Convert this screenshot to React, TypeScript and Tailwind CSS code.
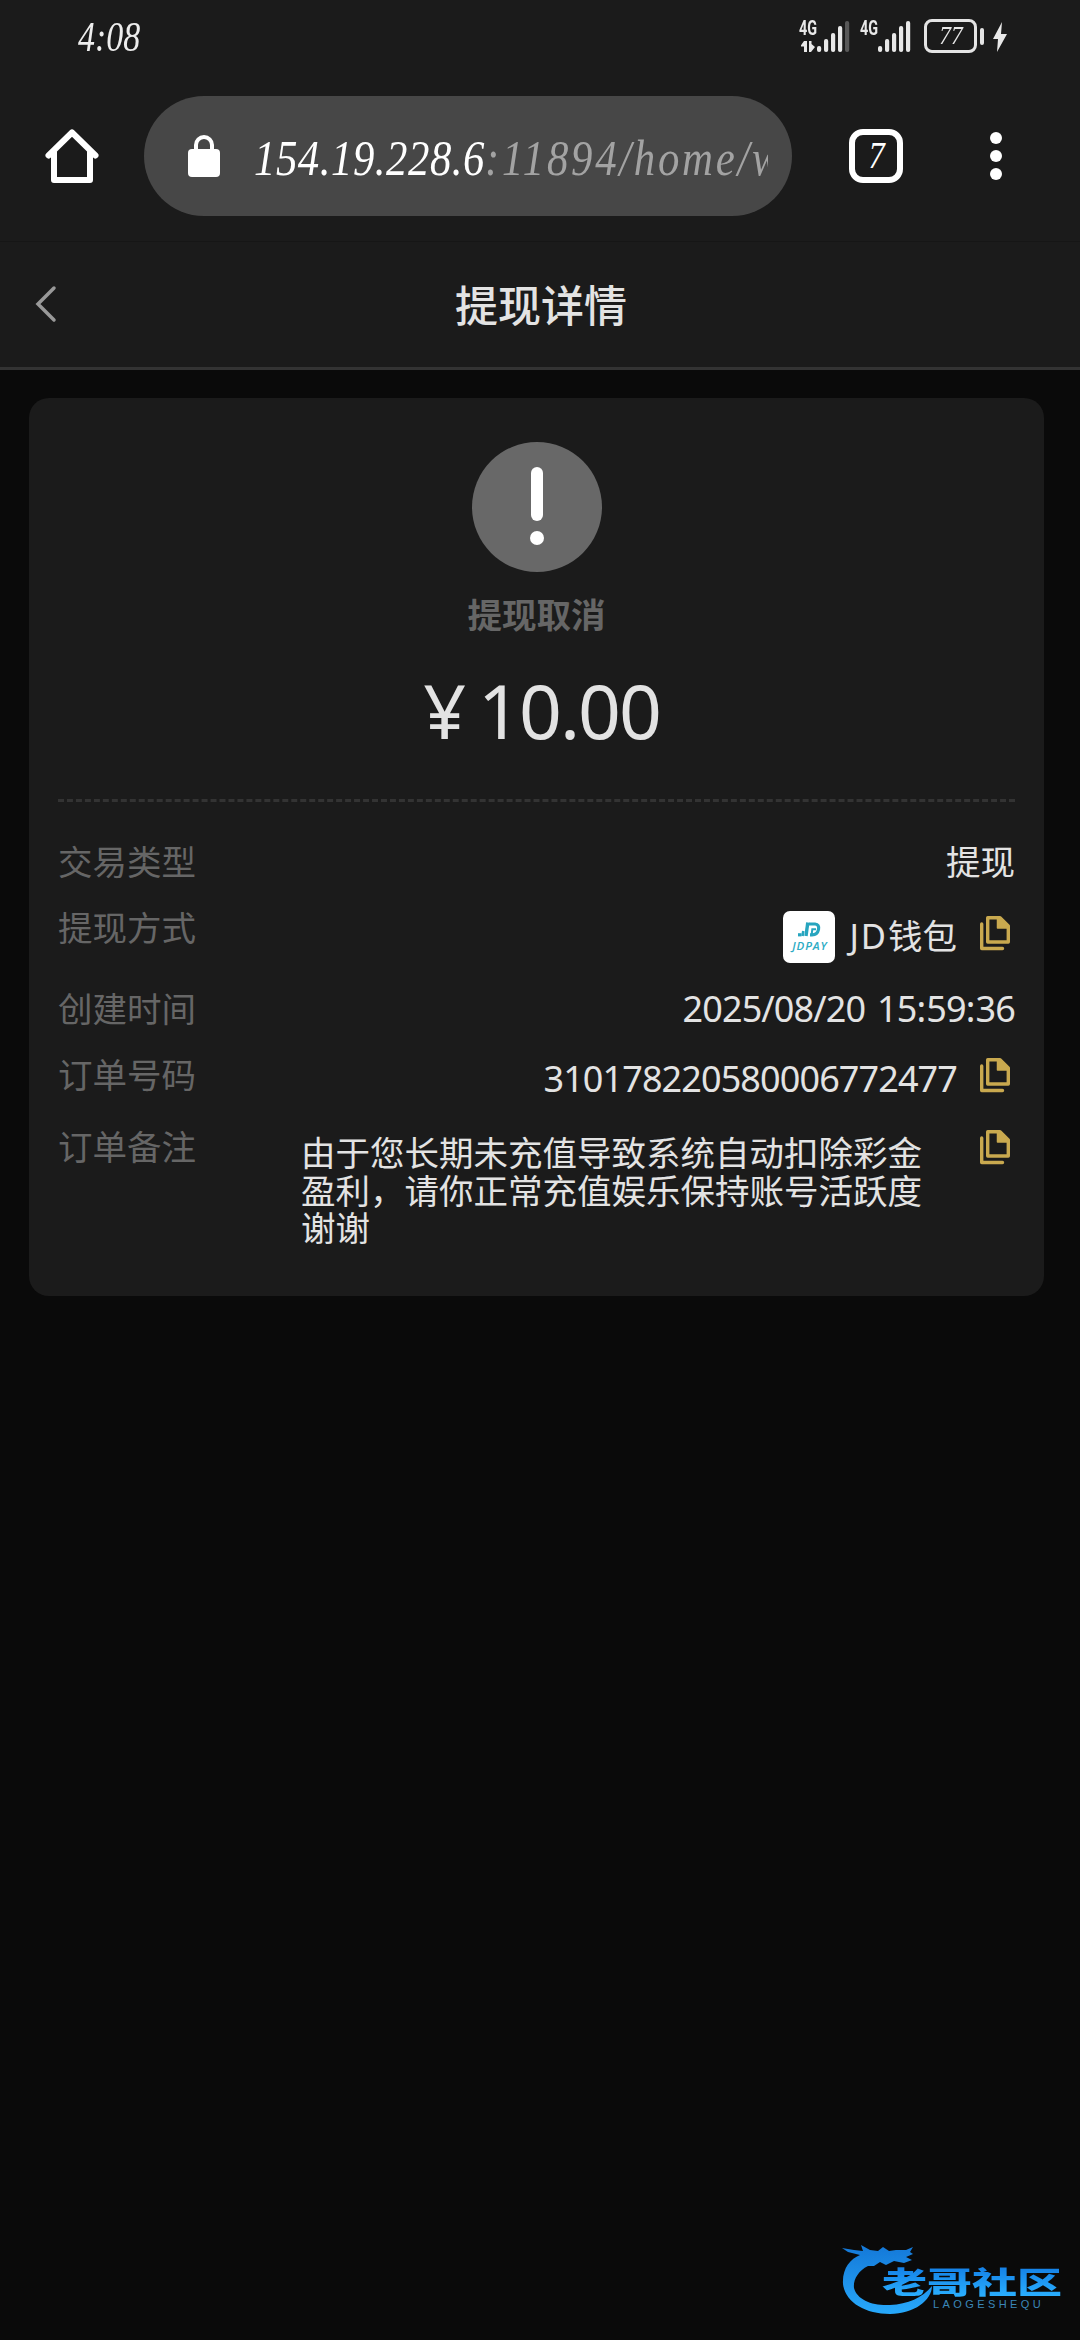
import React from 'react';

interface DetailRowProps {
  label: string;
  className: string;
  children: React.ReactNode;
}

const StatusBar: React.FC = () => (
  <div className="flex h-[72px] items-start justify-between pl-[78px] pr-[72px]">
    <span className="mt-[13px] inline-block origin-left scale-x-[0.79] font-['Liberation_Serif'] text-[43px] leading-[48px] italic text-[#ededed]">
      4:08
    </span>
    <div className="mt-[19px] flex items-start text-[#e8e8e8]">
      <SignalIcon weak />
      <div className="w-[11px]" />
      <SignalIcon />
      <div className="ml-[12px] flex h-[34px] w-[53px] items-center justify-center rounded-[8px] border-[3px] border-[#e4e4e4]">
        <span className="inline-block scale-x-90 font-['Liberation_Serif'] text-[26px] leading-[28px] italic">77</span>
      </div>
      <div className="ml-[3px] mt-[9px] h-[17px] w-[4px] rounded-[2px] bg-[#e4e4e4]" />
      <svg className="ml-[8px] mt-[3px] h-[30px] w-[16px]" viewBox="0 0 16 30" fill="currentColor">
        <path d="M10 0 L1 17 H6 L5 30 L15 12 H9 Z" />
      </svg>
    </div>
  </div>
);

const SignalIcon: React.FC<{ weak?: boolean }> = ({ weak = false }) => (
  <div className="relative h-[34px] w-[50px]">
    <span className="absolute -left-[2px] top-0 inline-block origin-left scale-x-[0.72] font-['Roboto'] text-[20px] leading-[18px] font-bold">
      4G
    </span>
    <svg className="h-[34px] w-[50px]" viewBox="0 0 50 34" fill="currentColor">
      {weak && <path d="M3 22 H6 V33 H3 V27.500 H-1 Z M8 22 H10.500 V25 L14 28 L10 33 H8 Z" overflow="visible" />}
      <rect x="16" y="27" width="4.200" height="6" rx="2" />
      <rect x="23" y="20" width="4.200" height="13" rx="2" />
      <rect x="30" y="14" width="4.200" height="19" rx="2" />
      <rect x="37" y="7" width="4.200" height="26" rx="2" />
      <rect x="44" y="2" width="4.200" height="31" rx="2" opacity={weak ? 0.3 : 1} />
    </svg>
  </div>
);

const BrowserBar: React.FC = () => (
  <div className="flex h-[170px] items-start border-b border-[#161616] pt-[24px]">
    <svg
      className="ml-[42px] mt-[30px] h-[60px] w-[60px]"
      viewBox="0 0 60 60"
      fill="none"
      stroke="white"
      strokeWidth="6"
      strokeLinecap="round"
      strokeLinejoin="round"
    >
      <path d="M6.500 29.500 L30 6.500 L53.500 29.500" />
      <path d="M12 26 V54 H48 V26" />
    </svg>
    <div className="ml-[42px] flex h-[120px] w-[648px] items-center rounded-full bg-[#474747] pl-[44px] pr-[24px]">
      <svg className="h-[44px] w-[32px] shrink-0" viewBox="0 0 32 44">
        <path d="M8 17 V11 a8 8 0 0 1 16 0 V17" fill="none" stroke="white" strokeWidth="4" />
        <rect y="15" width="32" height="28" rx="4" fill="white" />
      </svg>
      <div className="mt-[3px] ml-[34px] w-[514px] overflow-hidden font-['Liberation_Serif'] text-[51px] leading-[64px] italic whitespace-nowrap">
        <div className="inline-block origin-left scale-x-[0.84]">
          <span className="tracking-[0.600px] text-white">154.19.228.6</span>
          <span className="tracking-[3.200px] text-[#a3a3a3]">:11894/home/w</span>
        </div>
      </div>
    </div>
    <div className="ml-[57px] mt-[33px] flex h-[54px] w-[54px] items-center justify-center rounded-[14px] border-[6px] border-white">
      <span className="inline-block -translate-y-px scale-x-85 font-['Liberation_Serif'] text-[38px] leading-[40px] italic text-white">7</span>
    </div>
    <div className="ml-[87px] mt-[36px] flex flex-col gap-[6px]">
      <div className="size-[12px] rounded-full bg-white" />
      <div className="size-[12px] rounded-full bg-white" />
      <div className="size-[12px] rounded-full bg-white" />
    </div>
  </div>
);

const PageHeader: React.FC = () => (
  <div className="flex h-[128px] items-center border-b-[3px] border-[#333333] pl-[34px] pr-[56px]">
    <svg className="h-[40px] w-[24px]" viewBox="0 0 24 40" fill="none" stroke="#999999" strokeWidth="3.500" strokeLinecap="round">
      <path d="M20 3 L4 19 L20 35" />
    </svg>
    <h1 className="mt-[2px] flex-1 text-center text-[43px] leading-[60px] font-medium text-[#e3e3e3]">提现详情</h1>
  </div>
);

const CopyIcon: React.FC = () => (
  <svg className="h-[36px] w-[32px]" viewBox="0 0 32 36" fill="none" stroke="#c9a94f" strokeWidth="3.400" strokeLinejoin="round" strokeLinecap="round">
    <path d="M8.700 2.700 H21 L29.300 11 V27 H8.700 Z" />
    <path d="M18.500 2.700 H21 L29.300 11 V13 H18.500 Z" fill="#c9a94f" strokeWidth="1.500" />
    <path d="M2.700 9 V33.500 H23.500" />
  </svg>
);

const JdPayLogo: React.FC = () => (
  <div className="flex size-[52px] flex-col items-center rounded-[7px] bg-white pt-[11px]">
    <svg className="h-[15px] w-[24px]" viewBox="0 0 24 15" fill="none" stroke="#27a5bf">
      <path d="M1 12.800 H4.500" strokeWidth="3.200" />
      <path d="M5.500 14 L6.300 9" strokeWidth="2.600" />
      <path d="M10.800 0.500 L9 14" strokeWidth="3.400" />
      <path d="M12 2 H18 Q22.500 2.500 21.500 7.500 Q20.500 12.800 15 12.800 H13" strokeWidth="3.200" />
      <path d="M14.500 14 L15.300 7.300 H19" strokeWidth="2" />
    </svg>
    <span className="mt-[2px] pl-px font-['Open_Sans'] text-[11.500px] leading-[14px] font-semibold tracking-[0.900px] italic text-[#2cabc4]">
      JDPAY
    </span>
  </div>
);

const DetailRow: React.FC<DetailRowProps> = ({ label, className, children }) => (
  <div className={`flex items-start justify-between ${className}`}>
    <span className="text-[34.500px] leading-[40px] text-[#666666]">{label}</span>
    {children}
  </div>
);

const Watermark: React.FC = () => (
  <div className="absolute right-[12px] bottom-[24px] h-[74px] w-[228px]">
    <svg className="absolute inset-0 h-[74px] w-[228px]" viewBox="0 0 228 74">
      <defs>
        <linearGradient id="dragon" x1="0" y1="0" x2="0" y2="1">
          <stop offset="0" stopColor="#1478d8" />
          <stop offset="1" stopColor="#27a9fb" />
        </linearGradient>
      </defs>
      <path
        d="M2 6 L14 8 L23 9 L21 3 L30 8 L38 9 L43 5 L49 9 L56 8 L66 8 L73 5 L70 10 L73 12 L66 15 L72 18 L64 21 L54 19 L46 23 L40 20 L34 24 L28 24 C18 29 13 38 14 46 C17 58 33 64 50 63 C68 62 82 56 92 44 C92 58 74 72 50 72 C25 72 5 60 3 42 C2 27 10 17 20 13 L8 10 Z"
        fill="url(#dragon)"
      />
    </svg>
    <div className="absolute left-[42px] top-[25px] h-[30px] origin-left scale-x-[1.5] bg-linear-to-b from-[#1580e6] to-[#2bb0ff] bg-clip-text text-[30px] leading-[30px] font-black whitespace-nowrap text-transparent">
      老哥社区
    </div>
    <div className="absolute left-[93px] top-[56px] font-['Liberation_Sans'] text-[11px] leading-[12px] tracking-[3.400px] text-[#3a87b8]">
      LAOGESHEQU
    </div>
  </div>
);

export default function App() {
  return (
    <div className="relative h-[2340px] w-[1080px] overflow-hidden bg-[#0a0a0a] font-['Noto_Sans','Noto_Sans_CJK_SC',sans-serif]">
      <div className="bg-[#1b1b1b]">
        <StatusBar />
        <BrowserBar />
        <PageHeader />
      </div>

      <div className="mt-[28px] ml-[29px] h-[898px] w-[1015px] rounded-[20px] bg-[#1b1b1b] px-[29px] pt-[44px] text-[#e3e3e3]">
        <div className="flex flex-col items-center">
          <div className="flex size-[130px] flex-col items-center rounded-full bg-[#686868] pt-[25px]">
            <div className="h-[54px] w-[12px] rounded-full bg-white" />
            <div className="mt-[10px] size-[14px] rounded-full bg-white" />
          </div>
          <div className="mt-[21px] h-[45px] text-[34.500px] leading-[44px] font-bold text-[#666666]">提现取消</div>
          <div className="mt-[27px] mb-[5px] flex pl-[10px] text-[75px] leading-[90px] tracking-[-2px]">
            <span>¥</span>
            <span className="ml-[14px]">10.00</span>
          </div>
        </div>

        <div className="mt-[39px] border-t-[3px] border-dashed border-[#333333]" />

        <div className="mt-[40px]">
          <DetailRow label="交易类型" className="h-[66px]">
            <span className="text-[34.500px] leading-[40px]">提现</span>
          </DetailRow>
          <DetailRow label="提现方式" className="h-[81px]">
            <div className="flex items-start">
              <div className="mt-[3px]">
                <JdPayLogo />
              </div>
              <span className="mt-[8px] ml-[14px] text-[34.500px] leading-[40px]">
                <span className="tracking-[2px]">JD</span>钱包
              </span>
              <div className="mt-[7px] mr-[4px] ml-[22px]">
                <CopyIcon />
              </div>
            </div>
          </DetailRow>
          <DetailRow label="创建时间" className="h-[66px]">
            <span className="text-[36px] leading-[40px] tracking-[-0.900px]">
              2025/08/20<span className="ml-[12px]">15</span>
              <span className="tracking-[0.200px]">:</span>59<span className="tracking-[0.200px]">:</span>36
            </span>
          </DetailRow>
          <DetailRow label="订单号码" className="h-[72px]">
            <div className="flex items-start">
              <span className="mt-[4px] text-[36px] leading-[40px] tracking-[-0.900px]">310178220580006772477</span>
              <div className="mt-[2px] mr-[4px] ml-[22px]">
                <CopyIcon />
              </div>
            </div>
          </DetailRow>
          <DetailRow label="订单备注" className="h-[130px]">
            <div className="flex items-start">
              <p className="mt-[7px] w-[626px] text-[34.500px] leading-[37.500px]">
                由于您长期未充值导致系统自动扣除彩金盈利，请你正常充值娱乐保持账号活跃度谢谢
              </p>
              <div className="mt-[2px] mr-[4px] ml-[52px]">
                <CopyIcon />
              </div>
            </div>
          </DetailRow>
        </div>
      </div>

      <Watermark />
    </div>
  );
}
